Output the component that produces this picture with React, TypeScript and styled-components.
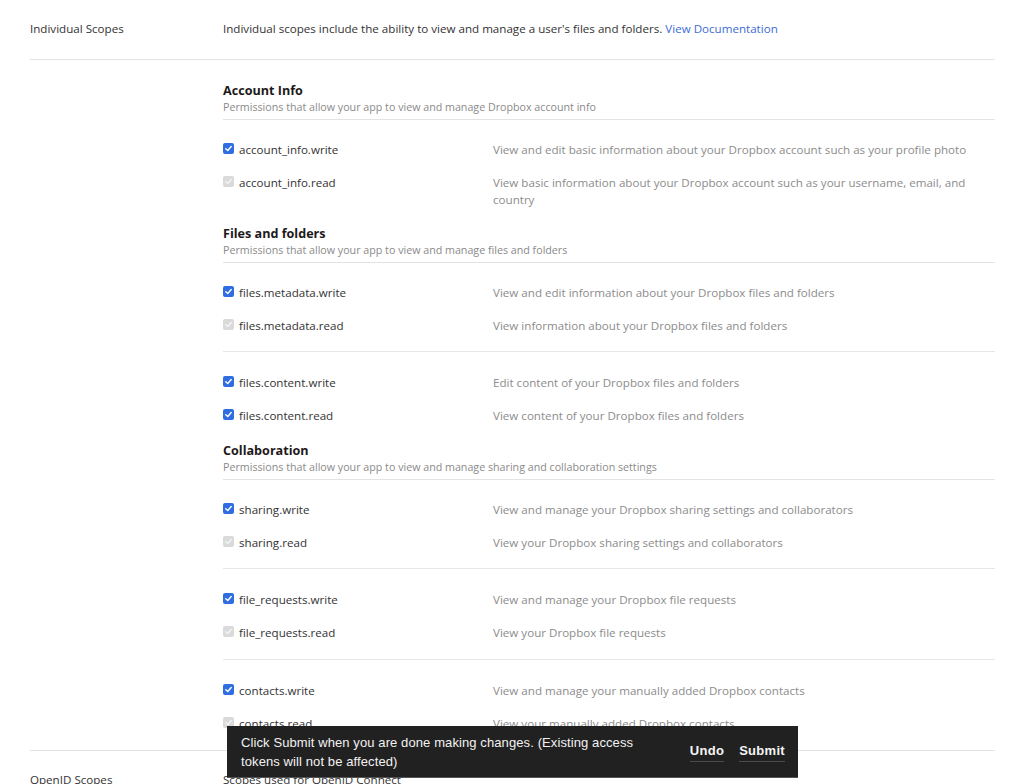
import React from "react";
import styled, { createGlobalStyle } from "styled-components";

const GlobalStyle = createGlobalStyle`
  body {
    margin: 0;
    background: #ffffff;
    font-family: "Open Sans", "Liberation Sans", sans-serif;
    color: #1e1919;
  }
`;

const Page = styled.div`
  padding: 0 29px 0 30px;
`;

const SettingRow = styled.div<{ $divider?: boolean }>`
  display: grid;
  grid-template-columns: 193px 1fr;
  padding: 20px 0 22px;
  border-top: ${(p) => (p.$divider ? "1px solid #e3e3e3" : "none")};
  font-size: 11.6px;
  line-height: 17px;
`;

const Label = styled.div`
  color: #333;
`;

const Intro = styled.div`
  color: #333;

  a {
    color: #3d6cd3;
    text-decoration: none;
  }
`;

const ScopesArea = styled.div`
  display: grid;
  grid-template-columns: 193px 1fr;
  border-top: 1px solid #e3e3e3;
  padding-top: 22px;
`;

const Section = styled.section``;

const SectionHead = styled.div`
  padding-bottom: 4px;
  border-bottom: 1px solid #e3e3e3;
`;

const SectionTitle = styled.h3`
  margin: 0;
  font-size: 12.6px;
  line-height: 18px;
  font-weight: 700;
  color: #1e1919;
`;

const SectionSub = styled.div`
  font-size: 10.7px;
  line-height: 15px;
  color: #8a8a8a;
`;

const Group = styled.div<{ $first?: boolean }>`
  padding: ${(p) => (p.$first ? "13px 0 9px" : "14px 0 10px")};
  border-top: ${(p) => (p.$first ? "none" : "1px solid #e6e6e6")};
`;

const ScopeRow = styled.div`
  display: grid;
  grid-template-columns: 270px 1fr;
  padding: 8px 0;
  font-size: 11.6px;
  line-height: 17px;
`;

const ScopeName = styled.div`
  display: flex;
  align-items: flex-start;
  gap: 5px;
  color: #333;
`;

const Box = styled.span<{ $on: boolean }>`
  flex: none;
  width: 11px;
  height: 11px;
  margin-top: 2px;
  border-radius: 2px;
  background: ${(p) => (p.$on ? "#2f6ee0" : "#dadada")};
  display: flex;
  align-items: center;
  justify-content: center;
`;

const ScopeDesc = styled.div`
  color: #8c8c8c;
`;

const Toast = styled.div`
  position: fixed;
  left: 227px;
  top: 726px;
  width: 571px;
  height: 52px;
  box-sizing: border-box;
  background: #222121;
  border-bottom: 1px solid #555;
  display: flex;
  align-items: center;
  justify-content: space-between;
  padding: 0 13px 0 14px;
  font-family: "Liberation Sans", Arial, sans-serif;
`;

const ToastText = styled.div`
  width: 420px;
  font-size: 13px;
  line-height: 19px;
  color: #f2f2f2;
  letter-spacing: 0.1px;
`;

const ToastActions = styled.div`
  display: flex;
  gap: 15px;
  padding-top: 2px;
`;

const ToastButton = styled.span`
  font-size: 13px;
  font-weight: 700;
  color: #f5f5f5;
  padding-bottom: 3px;
  border-bottom: 1px solid #4a4a4a;
  letter-spacing: 0.3px;
`;

type Scope = { name: string; desc: string; on: boolean };
type SectionData = { title: string; sub: string; groups: Scope[][] };

const sections: SectionData[] = [
  {
    title: "Account Info",
    sub: "Permissions that allow your app to view and manage Dropbox account info",
    groups: [
      [
        {
          name: "account_info.write",
          desc: "View and edit basic information about your Dropbox account such as your profile photo",
          on: true,
        },
        {
          name: "account_info.read",
          desc: "View basic information about your Dropbox account such as your username, email, and country",
          on: false,
        },
      ],
    ],
  },
  {
    title: "Files and folders",
    sub: "Permissions that allow your app to view and manage files and folders",
    groups: [
      [
        { name: "files.metadata.write", desc: "View and edit information about your Dropbox files and folders", on: true },
        { name: "files.metadata.read", desc: "View information about your Dropbox files and folders", on: false },
      ],
      [
        { name: "files.content.write", desc: "Edit content of your Dropbox files and folders", on: true },
        { name: "files.content.read", desc: "View content of your Dropbox files and folders", on: true },
      ],
    ],
  },
  {
    title: "Collaboration",
    sub: "Permissions that allow your app to view and manage sharing and collaboration settings",
    groups: [
      [
        { name: "sharing.write", desc: "View and manage your Dropbox sharing settings and collaborators", on: true },
        { name: "sharing.read", desc: "View your Dropbox sharing settings and collaborators", on: false },
      ],
      [
        { name: "file_requests.write", desc: "View and manage your Dropbox file requests", on: true },
        { name: "file_requests.read", desc: "View your Dropbox file requests", on: false },
      ],
      [
        { name: "contacts.write", desc: "View and manage your manually added Dropbox contacts", on: true },
        { name: "contacts.read", desc: "View your manually added Dropbox contacts", on: false },
      ],
    ],
  },
];

const Check: React.FC<{ on: boolean }> = ({ on }) => (
  <Box $on={on}>
    <svg width="9" height="9" viewBox="0 0 10 10">
      <path
        d="M2 5.2 L4.2 7.3 L8 2.8"
        fill="none"
        stroke={on ? "#fff" : "#f4f4f4"}
        strokeWidth="1.6"
        strokeLinecap="round"
        strokeLinejoin="round"
      />
    </svg>
  </Box>
);

const App: React.FC = () => {
  return (
    <>
      <GlobalStyle />
      <Page>
        <SettingRow>
          <Label>Individual Scopes</Label>
          <Intro>
            Individual scopes include the ability to view and manage a user's files and folders.{" "}
            <a href="#">View Documentation</a>
          </Intro>
        </SettingRow>
        <ScopesArea>
          <div />
          <div>
            {sections.map((s) => (
              <Section key={s.title}>
                <SectionHead>
                  <SectionTitle>{s.title}</SectionTitle>
                  <SectionSub>{s.sub}</SectionSub>
                </SectionHead>
                {s.groups.map((g, i) => (
                  <Group key={i} $first={i === 0}>
                    {g.map((sc) => (
                      <ScopeRow key={sc.name}>
                        <ScopeName>
                          <Check on={sc.on} />
                          {sc.name}
                        </ScopeName>
                        <ScopeDesc>{sc.desc}</ScopeDesc>
                      </ScopeRow>
                    ))}
                  </Group>
                ))}
              </Section>
            ))}
          </div>
        </ScopesArea>
        <SettingRow $divider>
          <Label>OpenID Scopes</Label>
          <Intro>Scopes used for OpenID Connect</Intro>
        </SettingRow>
      </Page>
      <Toast>
        <ToastText>
          Click Submit when you are done making changes. (Existing access tokens will not be affected)
        </ToastText>
        <ToastActions>
          <ToastButton>Undo</ToastButton>
          <ToastButton>Submit</ToastButton>
        </ToastActions>
      </Toast>
    </>
  );
};

export default App;
